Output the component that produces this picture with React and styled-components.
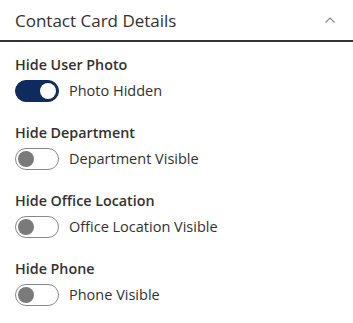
import React, { useState } from 'react'
import styled, { createGlobalStyle } from 'styled-components'

const GlobalStyle = createGlobalStyle`
  body {
    margin: 0;
    background: #ffffff;
    font-family: "Open Sans", "Noto Sans", sans-serif;
    color: #323130;
  }
`

const Pane = styled.div`
  width: 353px;
`

const Header = styled.div`
  height: 40px;
  display: flex;
  align-items: center;
  justify-content: space-between;
  padding: 0 17px 0 15px;
  border-bottom: 2px solid #333333;
`

const Title = styled.span`
  font-size: 17px;
  font-weight: 400;
  color: #323130;
`

const Body = styled.div`
  padding: 13px 15px 0;
  display: flex;
  flex-direction: column;
  gap: 21px;
`

const Field = styled.div`
  display: flex;
  flex-direction: column;
  gap: 5px;
`

const Label = styled.div`
  font-size: 14.3px;
  font-weight: 600;
  line-height: 20px;
  color: #323130;
`

const Row = styled.label`
  display: flex;
  align-items: center;
  gap: 10px;
  cursor: pointer;
`

const Pill = styled.span`
  box-sizing: border-box;
  width: 44px;
  height: 22px;
  border-radius: 11px;
  border: 1px solid ${p => (p.$on ? '#0f2a5c' : '#8a8886')};
  background: ${p => (p.$on ? '#0f2a5c' : '#ffffff')};
  display: flex;
  align-items: center;
  justify-content: ${p => (p.$on ? 'flex-end' : 'flex-start')};
  padding: 0 2px;
`

const Thumb = styled.span`
  width: 16px;
  height: 16px;
  border-radius: 50%;
  background: ${p => (p.$on ? '#ffffff' : '#7a7a7a')};
`

const State = styled.span`
  font-size: 14.5px;
  line-height: 20px;
  color: #323130;
`

const fields = [
  { label: 'Hide User Photo', name: 'Photo', on: true },
  { label: 'Hide Department', name: 'Department', on: false },
  { label: 'Hide Office Location', name: 'Office Location', on: false },
  { label: 'Hide Phone', name: 'Phone', on: false },
]

const Toggle = ({ label, name, initial }) => {
  const [on, setOn] = useState(initial)
  return (
    <Field>
      <Label>{label}</Label>
      <Row onClick={() => setOn(!on)}>
        <Pill $on={on}>
          <Thumb $on={on} />
        </Pill>
        <State>{name} {on ? 'Hidden' : 'Visible'}</State>
      </Row>
    </Field>
  )
}

export default function App() {
  return (
    <>
      <GlobalStyle />
      <Pane>
        <Header>
          <Title>Contact Card Details</Title>
          <svg width="12" height="8" viewBox="0 0 12 8">
            <path d="M1.5 6.5 L6 2 L10.5 6.5" fill="none" stroke="#8a8886" strokeWidth="1.1" />
          </svg>
        </Header>
        <Body>
          {fields.map(f => (
            <Toggle key={f.label} label={f.label} name={f.name} initial={f.on} />
          ))}
        </Body>
      </Pane>
    </>
  )
}
